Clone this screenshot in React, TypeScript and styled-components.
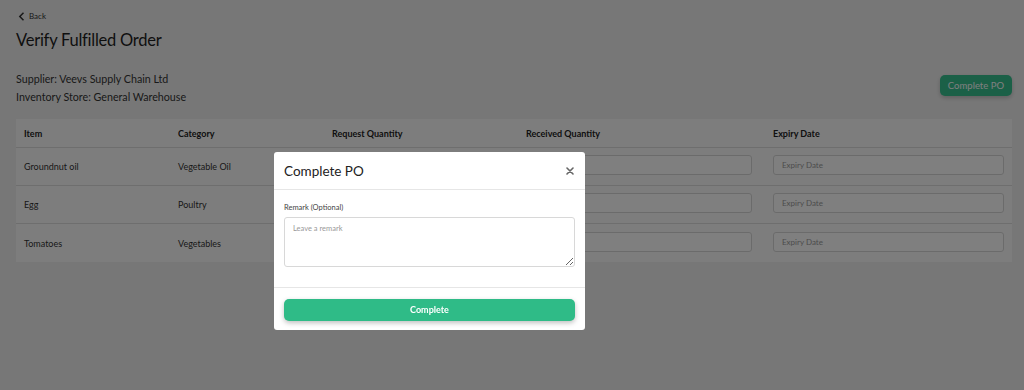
import React from "react";
import styled, { createGlobalStyle } from "styled-components";

const Global = createGlobalStyle`
  html, body { margin: 0; padding: 0; background: #efefef; }
  body { font-family: Lato, "Noto Sans", sans-serif; color: #222; }
  * { box-sizing: border-box; }
`;

const Page = styled.div`
  width: 1024px;
  height: 390px;
  padding: 10px 12px 0 16px;
  background: #efefef;
`;

const BackLink = styled.div`
  display: flex;
  align-items: center;
  gap: 4px;
  font-size: 8px;
  color: #333;
  height: 12px;
  padding-left: 2px;
`;

const Title = styled.h1`
  margin: 6px 0 0;
  font-size: 16.5px;
  font-weight: 400;
  color: #1e1e1e;
  line-height: 24px;
  letter-spacing: -0.25px;
`;

const InfoRow = styled.div`
  display: flex;
  justify-content: space-between;
  align-items: flex-start;
  margin-top: 20px;
`;

const InfoList = styled.div`
  display: flex;
  flex-direction: column;
  gap: 4px;
  font-size: 10.7px;
  color: #333;
  line-height: 14px;
`;

const PrimaryButton = styled.button`
  margin-top: 3px;
  background: #36c08f;
  color: #fff;
  border: none;
  border-radius: 5px;
  font-family: inherit;
  font-size: 9.5px;
  height: 21px;
  padding: 0 8px;
  box-shadow: 0 2px 4px rgba(0, 0, 0, 0.2);
`;

const Card = styled.div`
  margin-top: 15px;
  width: 996px;
  background: #fbfbfb;
`;

const Row = styled.div<{ $head?: boolean }>`
  display: grid;
  grid-template-columns: 154px 154px 194px 247px 1fr;
  align-items: center;
  height: ${(p) => (p.$head ? "29px" : "38px")};
  border-bottom: 1px solid #dcdcdc;
  &:last-child { border-bottom: none; }
`;

const HeadCell = styled.div`
  padding: 0 8px;
  font-size: 9px;
  font-weight: 700;
  color: #222;
`;

const Cell = styled.div<{ $right?: number }>`
  padding: 0 ${(p) => p.$right ?? 8}px 0 8px;
  font-size: 9px;
  color: #333;
`;

const Field = styled.input`
  display: block;
  width: 100%;
  height: 20px;
  margin-bottom: 3px;
  border: 1px solid #d6d6d6;
  border-radius: 3px;
  background: #fff;
  font-family: inherit;
  font-size: 8px;
  padding: 0 8px;
  &::placeholder { color: #999; }
`;

const Overlay = styled.div`
  position: fixed;
  inset: 0;
  background: rgba(0, 0, 0, 0.5);
`;

const Modal = styled.div`
  position: absolute;
  left: 274px;
  top: 152px;
  width: 311px;
  height: 178px;
  background: #fff;
  border-radius: 3px;
  display: flex;
  flex-direction: column;
`;

const ModalHeader = styled.div`
  display: flex;
  justify-content: space-between;
  align-items: center;
  height: 38px;
  padding: 0 10px;
  border-bottom: 1px solid #e6e6e6;
`;

const ModalTitle = styled.div`
  font-size: 13.5px;
  color: #222;
  padding-top: 1px;
`;

const CloseBtn = styled.div`
  display: flex;
  align-items: center;
  padding-right: 1px;
`;

const ModalBody = styled.div`
  height: 98px;
  padding: 13px 10px 0;
  border-bottom: 1px solid #e6e6e6;
`;

const Label = styled.div`
  font-size: 7.5px;
  color: #444;
  margin-bottom: 5px;
`;

const TextArea = styled.textarea`
  display: block;
  width: 100%;
  height: 50px;
  border: 1px solid #d8d8d8;
  border-radius: 3px;
  font-family: inherit;
  font-size: 7.5px;
  padding: 6px 8px;
  resize: vertical;
  &::placeholder { color: #999; }
`;

const ModalFooter = styled.div`
  padding: 9px 10px 0;
`;

const WideButton = styled.button`
  width: 100%;
  height: 22px;
  background: #2fbb87;
  color: #fff;
  border: none;
  border-radius: 5px;
  font-family: inherit;
  font-size: 9px;
  font-weight: 700;
  box-shadow: 0 2px 5px rgba(0, 0, 0, 0.25);
`;

const rows = [
  { item: "Groundnut oil", cat: "Vegetable Oil" },
  { item: "Egg", cat: "Poultry" },
  { item: "Tomatoes", cat: "Vegetables" },
];

export default function App() {
  return (
    <>
      <Global />
      <Page>
        <BackLink>
          <svg width="7" height="9" viewBox="0 0 7 9">
            <path d="M5.5 0.8 L1.8 4.5 L5.5 8.2" fill="none" stroke="#333" strokeWidth="1.5" />
          </svg>
          Back
        </BackLink>
        <Title>Verify Fulfilled Order</Title>
        <InfoRow>
          <InfoList>
            <div>Supplier: Veevs Supply Chain Ltd</div>
            <div>Inventory Store: General Warehouse</div>
          </InfoList>
          <PrimaryButton>Complete PO</PrimaryButton>
        </InfoRow>
        <Card>
          <Row $head>
            <HeadCell>Item</HeadCell>
            <HeadCell>Category</HeadCell>
            <HeadCell>Request Quantity</HeadCell>
            <HeadCell>Received Quantity</HeadCell>
            <HeadCell>Expiry Date</HeadCell>
          </Row>
          {rows.map((r) => (
            <Row key={r.item}>
              <Cell>{r.item}</Cell>
              <Cell>{r.cat}</Cell>
              <Cell></Cell>
              <Cell $right={13}>
                <Field />
              </Cell>
              <Cell>
                <Field placeholder="Expiry Date" />
              </Cell>
            </Row>
          ))}
        </Card>
      </Page>
      <Overlay>
        <Modal>
          <ModalHeader>
            <ModalTitle>Complete PO</ModalTitle>
            <CloseBtn>
              <svg width="8" height="8" viewBox="0 0 8 8">
                <path d="M1 1 L7 7 M7 1 L1 7" stroke="#666" strokeWidth="1.6" strokeLinecap="round" />
              </svg>
            </CloseBtn>
          </ModalHeader>
          <ModalBody>
            <Label>Remark (Optional)</Label>
            <TextArea placeholder="Leave a remark" />
          </ModalBody>
          <ModalFooter>
            <WideButton>Complete</WideButton>
          </ModalFooter>
        </Modal>
      </Overlay>
    </>
  );
}
